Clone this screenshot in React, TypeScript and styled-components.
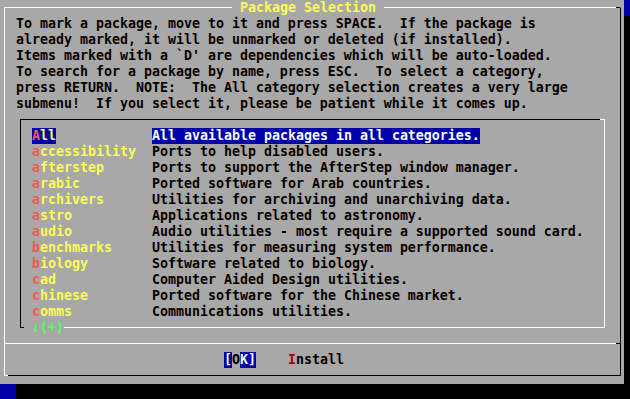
import React from 'react';
import styled, { createGlobalStyle } from 'styled-components';

const GlobalStyle = createGlobalStyle`
  html, body {
    margin: 0;
    padding: 0;
    background: #0000a8;
  }
`;

const Screen = styled.div`
  width: 630px;
  height: 399px;
  overflow: hidden;
  background: #0000a8;
  font-family: "DejaVu Sans Mono", "Liberation Mono", monospace;
  font-size: 13.29px;
  line-height: 16px;
  font-weight: bold;
  color: #000;
`;

const Dialog = styled.div`
  width: 624px;
  height: 384px;
  box-sizing: border-box;
  padding: 7px 3px 8px 4px;
  background: #a8a8a8;
  box-shadow: 16px 16px 0 #000;
`;

// raised box: white top/left, black bottom/right, corner glyphs tinted like the text-mode ones
const Frame = styled.div`
  position: relative;
  height: 100%;
  box-sizing: border-box;
  display: flex;
  flex-direction: column;
  border-top: 1px solid #fcfcfc;
  border-left: 1px solid #fcfcfc;
  border-right: 1px solid #000;
  border-bottom: 1px solid #000;

  &::before {
    content: '';
    position: absolute;
    top: -1px;
    right: 0;
    width: 4px;
    height: 1px;
    background: #000;
  }

  &::after {
    content: '';
    position: absolute;
    bottom: -1px;
    left: -1px;
    width: 4px;
    height: 1px;
    background: #fcfcfc;
  }
`;

const TitleRow = styled.div`
  height: 16px;
  margin-top: -8px;
  padding-left: 227px;
  display: flex;
  flex-shrink: 0;
`;

const Title = styled.span`
  padding: 0 8px;
  background: #a8a8a8;
  color: #fcfc54;
  white-space: pre;
`;

const Prompt = styled.div`
  padding-left: 11px;
  white-space: pre;
  flex-shrink: 0;
`;

// sunken box: black top/left, white bottom/right
const ListBox = styled.div`
  position: relative;
  width: 585px;
  height: 209px;
  margin: 7px 0 0 15px;
  padding: 8px 0 0 11px;
  box-sizing: border-box;
  display: flex;
  flex-direction: column;
  flex-shrink: 0;
  border-top: 1px solid #000;
  border-left: 1px solid #000;
  border-right: 1px solid #fcfcfc;
  border-bottom: 1px solid #fcfcfc;

  &::before {
    content: '';
    position: absolute;
    top: -1px;
    right: -1px;
    width: 5px;
    height: 1px;
    background: #fcfcfc;
  }

  &::after {
    content: '';
    position: absolute;
    bottom: -1px;
    left: -1px;
    width: 4px;
    height: 1px;
    background: #000;
  }
`;

const Row = styled.div`
  height: 16px;
  display: grid;
  grid-template-columns: 120px auto;
  justify-content: start;
  flex-shrink: 0;
  white-space: pre;
`;

const Name = styled.span<{ $active?: boolean }>`
  justify-self: start;
  color: #fcfc54;
  background: ${(p) => (p.$active ? '#0000a8' : 'transparent')};
`;

const Hot = styled.span`
  color: #fc5454;
`;

const Desc = styled.span<{ $active?: boolean }>`
  justify-self: start;
  color: ${(p) => (p.$active ? '#fcfcfc' : '#000')};
  background: ${(p) => (p.$active ? '#0000a8' : 'transparent')};
`;

const More = styled.span`
  position: relative;
  z-index: 1;
  align-self: flex-start;
  height: 16px;
  margin-left: -8px;
  padding-left: 8px;
  background: #a8a8a8;
  color: #54fc54;
  flex-shrink: 0;
`;

const Separator = styled.div`
  height: 1px;
  margin-top: 15px;
  box-sizing: border-box;
  background: #fcfcfc;
  border-right: 4px solid #000;
  flex-shrink: 0;
`;

const Buttons = styled.div`
  height: 16px;
  margin-top: 8px;
  padding-left: 219px;
  display: flex;
  gap: 32px;
  white-space: pre;
`;

const Button = styled.span`
  display: flex;
`;

const Key = styled.span<{ $bg?: string; $fg?: string }>`
  color: ${(p) => p.$fg || '#000'};
  background: ${(p) => p.$bg || 'transparent'};
`;

const prompt = [
  'To mark a package, move to it and press SPACE.  If the package is',
  'already marked, it will be unmarked or deleted (if installed).',
  "Items marked with a `D' are dependencies which will be auto-loaded.",
  'To search for a package by name, press ESC.  To select a category,',
  'press RETURN.  NOTE:  The All category selection creates a very large',
  'submenu!  If you select it, please be patient while it comes up.',
];

const categories = [
  ['All', 'All available packages in all categories.'],
  ['accessibility', 'Ports to help disabled users.'],
  ['afterstep', 'Ports to support the AfterStep window manager.'],
  ['arabic', 'Ported software for Arab countries.'],
  ['archivers', 'Utilities for archiving and unarchiving data.'],
  ['astro', 'Applications related to astronomy.'],
  ['audio', 'Audio utilities - most require a supported sound card.'],
  ['benchmarks', 'Utilities for measuring system performance.'],
  ['biology', 'Software related to biology.'],
  ['cad', 'Computer Aided Design utilities.'],
  ['chinese', 'Ported software for the Chinese market.'],
  ['comms', 'Communications utilities.'],
];

export default function App() {
  return (
    <>
      <GlobalStyle />
      <Screen>
        <Dialog>
          <Frame>
            <TitleRow>
              <Title>Package Selection</Title>
            </TitleRow>
            <Prompt>{prompt.join('\n')}</Prompt>
            <ListBox>
              {categories.map(([name, desc], i) => (
                <Row key={name}>
                  <Name $active={i === 0}>
                    <Hot>{name[0]}</Hot>
                    {name.slice(1)}
                  </Name>
                  <Desc $active={i === 0}>{desc}</Desc>
                </Row>
              ))}
              <More>↓(+)</More>
            </ListBox>
            <Separator />
            <Buttons>
              <Button>
                <Key $bg="#0000a8" $fg="#fcfcfc">[</Key>
                <Key>O</Key>
                <Key $bg="#0000a8" $fg="#fcfcfc">K]</Key>
              </Button>
              <Button>
                <Key $fg="#a80000">I</Key>
                <Key>nstall</Key>
              </Button>
            </Buttons>
          </Frame>
        </Dialog>
      </Screen>
    </>
  );
}
